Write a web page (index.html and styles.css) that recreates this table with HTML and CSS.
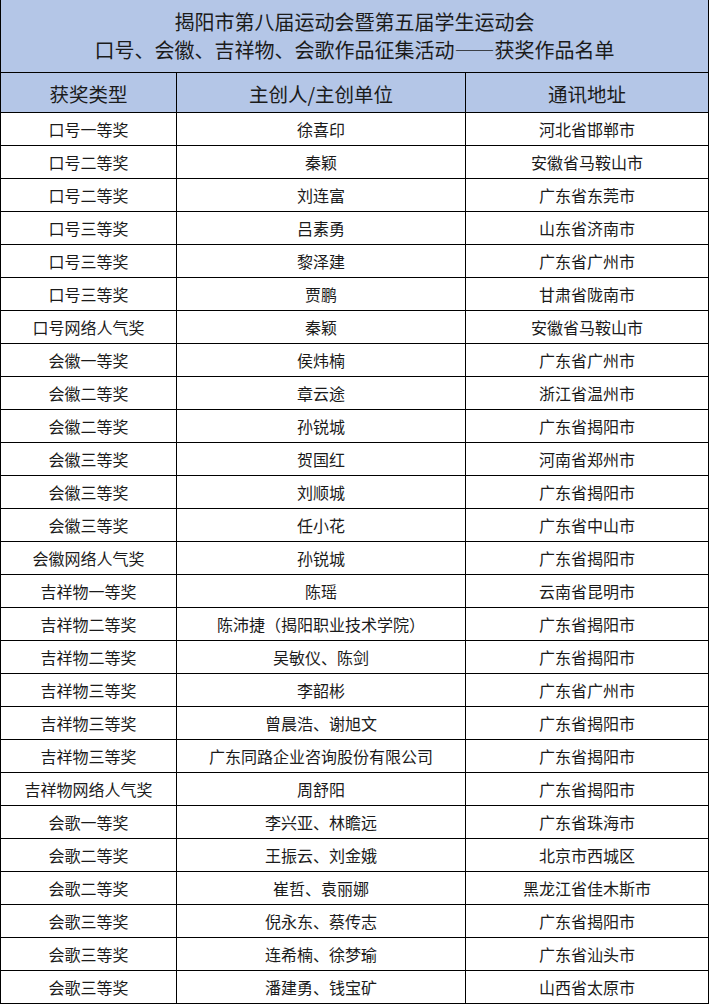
FILE: index.html
```html
<!DOCTYPE html>
<html lang="zh-CN">
<head>
<meta charset="utf-8">
<title>获奖作品名单</title>
<link rel="stylesheet" href="styles.css">
</head>
<body>
<div class="sheet">
  <div class="title">
    <div>揭阳市第八届运动会暨第五届学生运动会</div>
    <div>口号、会徽、吉祥物、会歌作品征集活动——获奖作品名单</div>
  </div>
  <div class="grid">
    <div class="cell head">获奖类型</div>
    <div class="cell head">主创人/主创单位</div>
    <div class="cell head">通讯地址</div>

    <div class="cell">口号一等奖</div><div class="cell">徐喜印</div><div class="cell">河北省邯郸市</div>
    <div class="cell">口号二等奖</div><div class="cell">秦颖</div><div class="cell">安徽省马鞍山市</div>
    <div class="cell">口号二等奖</div><div class="cell">刘连富</div><div class="cell">广东省东莞市</div>
    <div class="cell">口号三等奖</div><div class="cell">吕素勇</div><div class="cell">山东省济南市</div>
    <div class="cell">口号三等奖</div><div class="cell">黎泽建</div><div class="cell">广东省广州市</div>
    <div class="cell">口号三等奖</div><div class="cell">贾鹏</div><div class="cell">甘肃省陇南市</div>
    <div class="cell">口号网络人气奖</div><div class="cell">秦颖</div><div class="cell">安徽省马鞍山市</div>
    <div class="cell">会徽一等奖</div><div class="cell">侯炜楠</div><div class="cell">广东省广州市</div>
    <div class="cell">会徽二等奖</div><div class="cell">章云途</div><div class="cell">浙江省温州市</div>
    <div class="cell">会徽二等奖</div><div class="cell">孙锐城</div><div class="cell">广东省揭阳市</div>
    <div class="cell">会徽三等奖</div><div class="cell">贺国红</div><div class="cell">河南省郑州市</div>
    <div class="cell">会徽三等奖</div><div class="cell">刘顺城</div><div class="cell">广东省揭阳市</div>
    <div class="cell">会徽三等奖</div><div class="cell">任小花</div><div class="cell">广东省中山市</div>
    <div class="cell">会徽网络人气奖</div><div class="cell">孙锐城</div><div class="cell">广东省揭阳市</div>
    <div class="cell">吉祥物一等奖</div><div class="cell">陈瑶</div><div class="cell">云南省昆明市</div>
    <div class="cell">吉祥物二等奖</div><div class="cell">陈沛捷（揭阳职业技术学院）</div><div class="cell">广东省揭阳市</div>
    <div class="cell">吉祥物二等奖</div><div class="cell">吴敏仪、陈剑</div><div class="cell">广东省揭阳市</div>
    <div class="cell">吉祥物三等奖</div><div class="cell">李韶彬</div><div class="cell">广东省广州市</div>
    <div class="cell">吉祥物三等奖</div><div class="cell">曾晨浩、谢旭文</div><div class="cell">广东省揭阳市</div>
    <div class="cell">吉祥物三等奖</div><div class="cell">广东同路企业咨询股份有限公司</div><div class="cell">广东省揭阳市</div>
    <div class="cell">吉祥物网络人气奖</div><div class="cell">周舒阳</div><div class="cell">广东省揭阳市</div>
    <div class="cell">会歌一等奖</div><div class="cell">李兴亚、林瞻远</div><div class="cell">广东省珠海市</div>
    <div class="cell">会歌二等奖</div><div class="cell">王振云、刘金娥</div><div class="cell">北京市西城区</div>
    <div class="cell">会歌二等奖</div><div class="cell">崔哲、袁丽娜</div><div class="cell">黑龙江省佳木斯市</div>
    <div class="cell">会歌三等奖</div><div class="cell">倪永东、蔡传志</div><div class="cell">广东省揭阳市</div>
    <div class="cell">会歌三等奖</div><div class="cell">连希楠、徐梦瑜</div><div class="cell">广东省汕头市</div>
    <div class="cell">会歌三等奖</div><div class="cell">潘建勇、钱宝矿</div><div class="cell">山西省太原市</div>
  </div>
</div>
</body>
</html>
```

FILE: styles.css
```css
html, body {
  margin: 0;
  padding: 0;
  background: #ffffff;
}

body {
  font-family: "Noto Sans CJK SC", "Noto Sans", sans-serif;
  color: #1b1b1b;
  width: 709px;
}

.sheet {
  width: 709px;
  box-sizing: border-box;
}

.title {
  height: 72px;
  box-sizing: border-box;
  padding-top: 8px;
  background: #b4c6e7;
  border-left: 1px solid #000;
  border-right: 1px solid #000;
  border-bottom: 1px solid #000;
  text-align: center;
  font-size: 20px;
  line-height: 28px;
  height: 73px;
}

.grid {
  display: grid;
  grid-template-columns: 176px 289px 243px;
  grid-auto-rows: 33px;
  grid-template-rows: 40px;
  border-left: 1px solid #000;
}

.cell {
  border-right: 1px solid #000;
  border-bottom: 1px solid #000;
  display: flex;
  align-items: center;
  justify-content: center;
  font-size: 16px;
  white-space: nowrap;
}

.head {
  background: #b4c6e7;
  font-size: 19.5px;
  padding-top: 1px;
}
```
